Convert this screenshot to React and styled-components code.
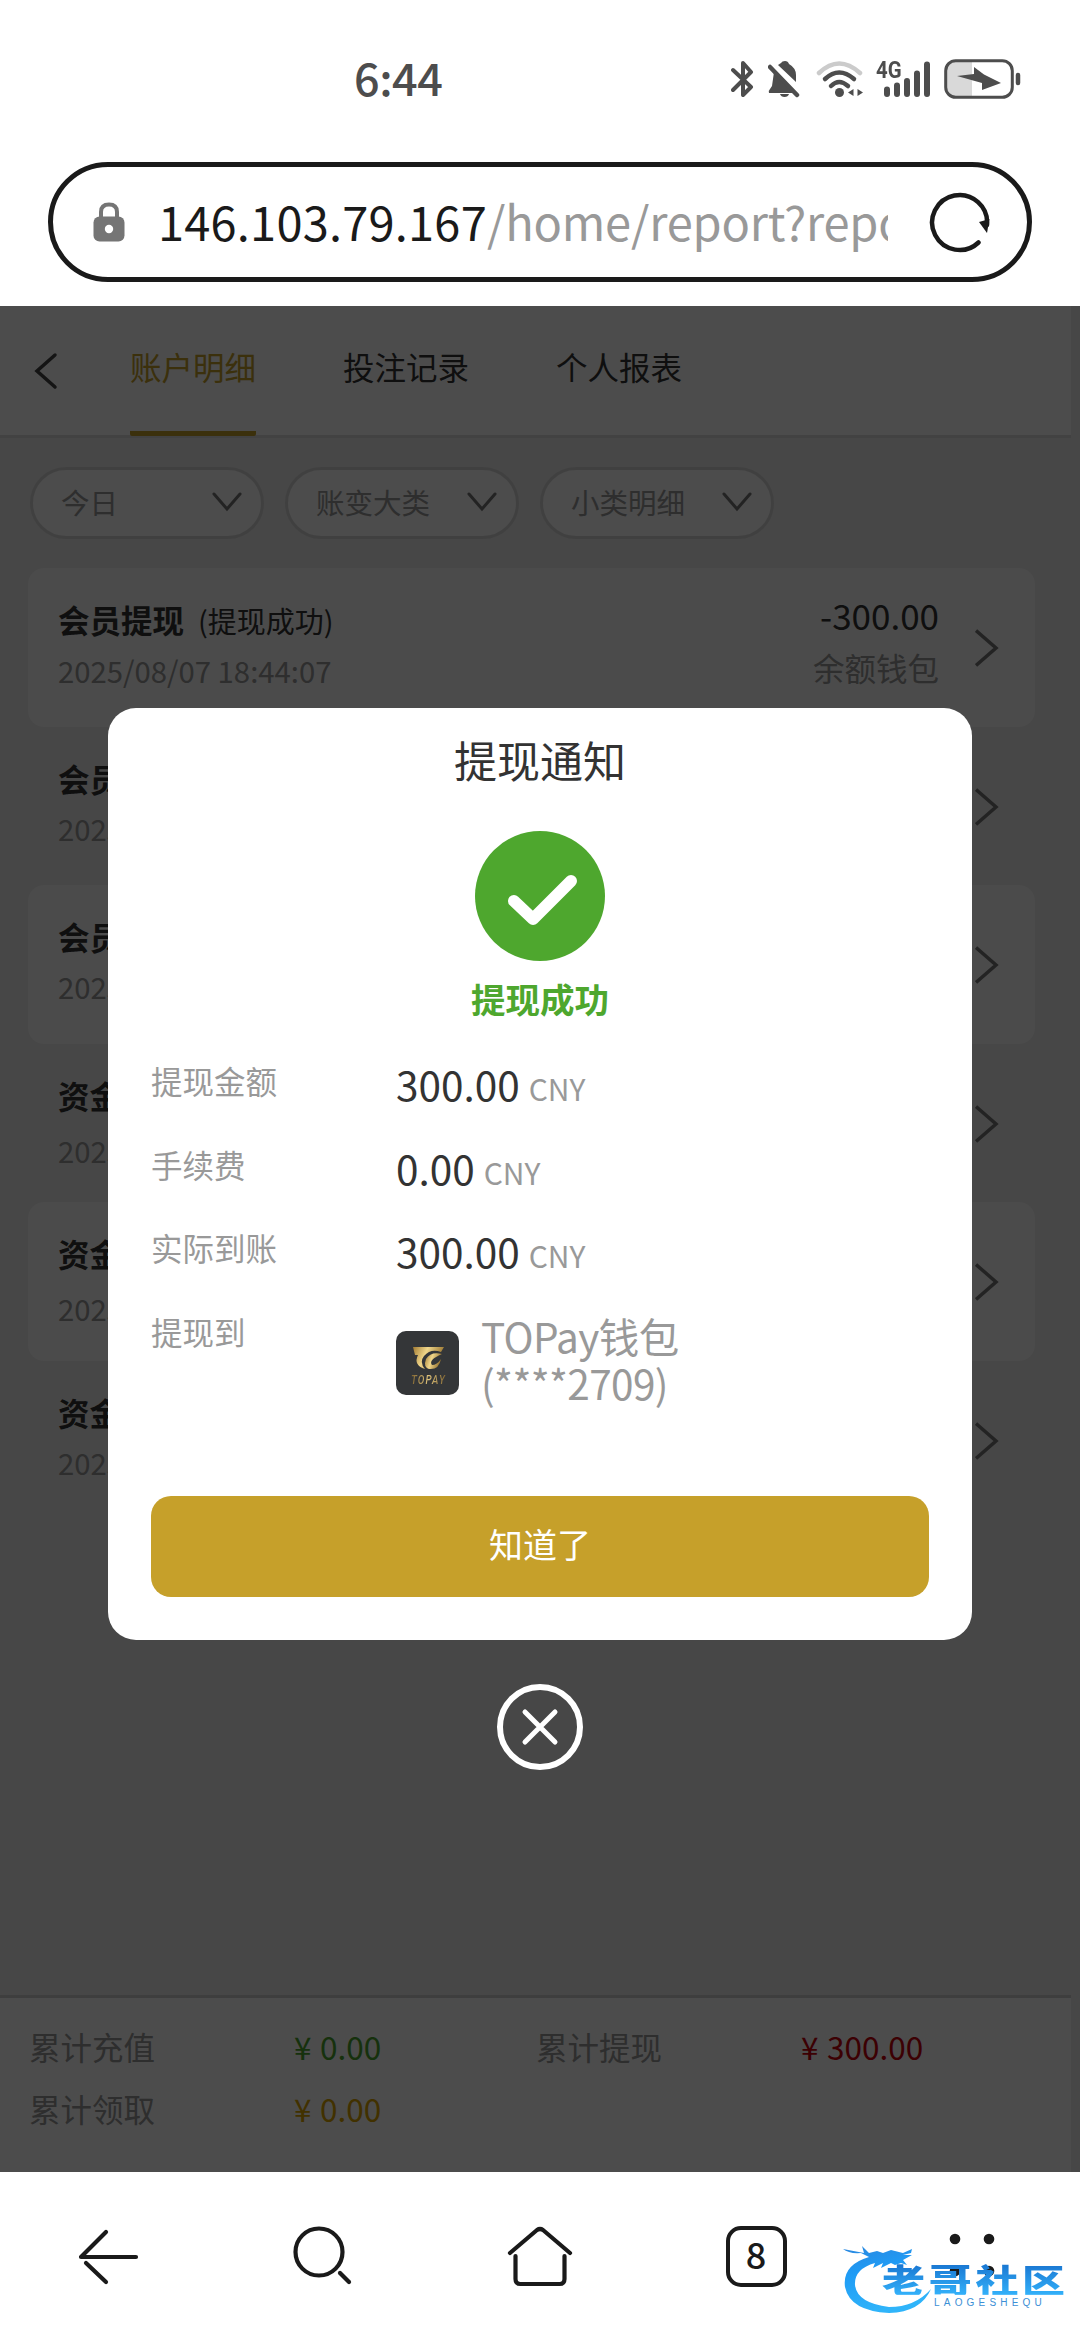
import React from 'react'
import styled, { createGlobalStyle } from 'styled-components'

const tabs = ['账户明细', '投注记录', '个人报表']

const filters = ['今日', '账变大类', '小类明细']

const records = [
    { title: '会员提现', status: '(提现成功)', date: '2025/08/07 18:44:07', amount: '-300.00', wallet: '余额钱包', card: true },
    { title: '会员', date: '2025', card: false },
    { title: '会员', date: '2025', card: true },
    { title: '资金', date: '2025', card: false, loose: true },
    { title: '资金', date: '2025', card: true, loose: true },
    { title: '资金', date: '2025', card: false },
]

const details = [
    { label: '提现金额', value: '300.00' },
    { label: '手续费', value: '0.00' },
    { label: '实际到账', value: '300.00' },
]

const totals = [
    { label: '累计充值', value: '0.00', color: '#4ca62e' },
    { label: '累计提现', value: '300.00', color: '#c8000a' },
    { label: '累计领取', value: '0.00', color: '#d9a400' },
]

function StatusIcons() {
    return (
        <StatusIconRow>
            <svg width="25" height="40" viewBox="0 0 25 40" fill="none" stroke="#4d4d4d" strokeWidth="4" strokeLinecap="round" strokeLinejoin="round">
                <path d="M2 11L20 28L12 36V4L20 13L2 31" />
            </svg>
            <svg width="36" height="40" viewBox="0 0 36 40">
                <path d="M6 13L26 34H1Q0 32 2 30L4 27Z" fill="#4d4d4d" />
                <path d="M10 6L13 4Q14 2 17 2Q20 2 21 5Q28 9 28 16V23Z" fill="#4d4d4d" />
                <path d="M2 8L29 36" stroke="#4d4d4d" strokeWidth="4.500" strokeLinecap="round" />
                <path d="M12 35H21Q20 38 16.500 38Q13 38 12 35Z" fill="#4d4d4d" />
            </svg>
            <svg width="48" height="40" viewBox="0 0 48 40" fill="none" strokeWidth="4.500" strokeLinecap="round">
                <path d="M3 14Q23 -5 44 14" stroke="#cbcbcb" />
                <path d="M9 20Q23 7 38 20" stroke="#4d4d4d" />
                <path d="M15 27Q23 19 32 27" stroke="#4d4d4d" />
                <circle cx="23.500" cy="33.500" r="4.500" fill="#4d4d4d" />
                <path d="M37.500 30V37L32 33.500ZM41.500 30V37L47 33.500Z" fill="#4d4d4d" />
            </svg>
            <SignalBox>
                <svg width="56" height="40" viewBox="0 0 56 40" stroke="#4d4d4d" strokeWidth="6" strokeLinecap="round">
                    <path d="M11 30.500V35M21 26.500V35M31 22V35M41 14.500V35M51 5.500V35" />
                </svg>
                <Network>4G</Network>
            </SignalBox>
            <svg width="78" height="40" viewBox="0 0 78 40">
                <path d="M12 2H28V38H12Q2 38 2 28V12Q2 2 12 2Z" fill="#d9d9d9" />
                <rect x="1.700" y="1.700" width="66.600" height="36.600" rx="10" fill="none" stroke="#4d4d4d" strokeWidth="3" />
                <path d="M30 8L40 15.500L57 24L38 31V24L13 17L30 15Z" fill="#4d4d4d" />
                <path d="M74 16V24" stroke="#4d4d4d" strokeWidth="4.500" strokeLinecap="round" />
            </svg>
        </StatusIconRow>
    )
}

function TopayLogo() {
    return (
        <LogoBox>
            <svg width="64" height="64" viewBox="0 0 64 64">
                <defs>
                    <linearGradient id="gold" x1="0" y1="0" x2="1" y2="0.300">
                        <stop offset="0" stopColor="#a37c33" />
                        <stop offset="0.450" stopColor="#f0d68a" />
                        <stop offset="1" stopColor="#94702c" />
                    </linearGradient>
                </defs>
                <path d="M17 16H48L45 21Q35 17 28 25Q23 31 29 38Q17 34 22 24H19Z" fill="url(#gold)" />
                <path d="M46 23Q35 20 30 28Q27 36 33 38Q43 39 45 28Q41 34 36 34Q32 29 46 23Z" fill="url(#gold)" />
            </svg>
            <LogoName>TOPAY</LogoName>
        </LogoBox>
    )
}

function Watermark() {
    return (
        <WatermarkBox>
            <svg width="100" height="72" viewBox="0 0 100 72">
                <defs>
                    <linearGradient id="dragon" x1="0" y1="0" x2="0.300" y2="1">
                        <stop offset="0" stopColor="#2b86dd" />
                        <stop offset="0.400" stopColor="#1f9bf5" />
                        <stop offset="1" stopColor="#2fb4fa" />
                    </linearGradient>
                </defs>
                <path d="M28 12Q1 20 4 42Q9 66 48 68Q80 67 90 44Q74 62 48 62Q16 58 14 40Q13 24 34 18L32 23L42 18L40 23L50 18L54 20L60 18L66 20L62 15L71 10H62L70 8L71 4L62 8L50 5L42 8L36 6L28 8L21 1L23 8L2 4Q8 9 20 8Z" fill="url(#dragon)" />
            </svg>
            <WatermarkName>老哥社区</WatermarkName>
            <WatermarkLatin>LAOGESHEQU</WatermarkLatin>
        </WatermarkBox>
    )
}

function App() {
    return (
        <Screen>
            <GlobalStyle />
            <StatusBar>
                <Clock>6:44</Clock>
                <StatusIcons />
            </StatusBar>
            <AddressBar>
                <svg width="32" height="40" viewBox="0 0 32 40">
                    <path d="M8 16V10Q8 2.500 16 2.500Q24 2.500 24 10V16" fill="none" stroke="#757575" strokeWidth="4" />
                    <rect x="0.500" y="14.500" width="31" height="25" rx="6" fill="#757575" />
                    <circle cx="16" cy="27" r="4.200" fill="#fff" />
                </svg>
                <Url><b>146.103.79.167</b>/home/report?repo</Url>
                <svg width="62" height="62" viewBox="0 0 62 62">
                    <path d="M49.500 51.500A27.500 27.500 0 1 1 58 34" fill="none" stroke="#1a1a1a" strokeWidth="4.500" strokeLinecap="round" />
                    <path d="M50 31L60.500 28L58 42Z" fill="#1a1a1a" />
                </svg>
            </AddressBar>

            <Page>
                <TabBar>
                    <svg width="24" height="38" viewBox="0 0 24 38" fill="none" stroke="#444" strokeWidth="3.500" strokeLinecap="round">
                        <path d="M21 3L3 19L21 35" />
                    </svg>
                    {
                        tabs.map((tab, i) => (
                            <Tab key={tab} $active={i === 0}>{tab}</Tab>
                        ))
                    }
                </TabBar>
                <Filters>
                    {
                        filters.map(filter => (
                            <Filter key={filter}>
                                {filter}
                                <svg width="32" height="20" viewBox="0 0 32 20" fill="none" stroke="#777" strokeWidth="3" strokeLinecap="round">
                                    <path d="M3 2L16 17L29 2" />
                                </svg>
                            </Filter>
                        ))
                    }
                </Filters>
                <Records>
                    {
                        records.map((item, i) => (
                            <Record key={i} $card={item.card}>
                                <RecordInfo>
                                    <RecordTitle>{item.title}{item.status && <small>{item.status}</small>}</RecordTitle>
                                    <RecordDate $loose={item.loose}>{item.date}</RecordDate>
                                </RecordInfo>
                                <RecordSum>
                                    <Amount>{item.amount}</Amount>
                                    <Wallet>{item.wallet}</Wallet>
                                </RecordSum>
                                <svg width="24" height="40" viewBox="0 0 24 40" fill="none" stroke="#777" strokeWidth="3.500">
                                    <path d="M1 2.500L21 20L1 37.500" />
                                </svg>
                            </Record>
                        ))
                    }
                </Records>
                <Totals>
                    {
                        totals.map(item => (
                            <Total key={item.label}>
                                <TotalLabel>{item.label}</TotalLabel>
                                <TotalValue $color={item.color}><i>¥</i>{item.value}</TotalValue>
                            </Total>
                        ))
                    }
                </Totals>

                <Overlay>
                    <Modal>
                        <ModalTitle>提现通知</ModalTitle>
                        <SuccessIcon>
                            <svg width="130" height="130" viewBox="0 0 130 130" fill="none" stroke="#fff" strokeWidth="12" strokeLinecap="round" strokeLinejoin="round">
                                <path d="M39 70L58 88L96 50" />
                            </svg>
                        </SuccessIcon>
                        <SuccessText>提现成功</SuccessText>
                        <Details>
                            {
                                details.map(item => (
                                    <DetailRow key={item.label}>
                                        <DetailLabel>{item.label}</DetailLabel>
                                        <DetailValue>{item.value}<Currency>CNY</Currency></DetailValue>
                                    </DetailRow>
                                ))
                            }
                            <DetailRow>
                                <DetailLabel>提现到</DetailLabel>
                                <Account>
                                    <TopayLogo />
                                    <AccountName>TOPay钱包<br />(****2709)</AccountName>
                                </Account>
                            </DetailRow>
                        </Details>
                        <ConfirmButton>知道了</ConfirmButton>
                    </Modal>
                    <CloseButton>
                        <svg width="40" height="40" viewBox="0 0 40 40" stroke="#fff" strokeWidth="5" strokeLinecap="round">
                            <path d="M5 5L35 35M35 5L5 35" />
                        </svg>
                    </CloseButton>
                </Overlay>
            </Page>

            <BottomNav>
                <NavItem>
                    <svg width="64" height="64" viewBox="0 0 64 64" fill="none" stroke="#1a1a1a" strokeWidth="4.200" strokeLinecap="round" strokeLinejoin="round">
                        <path d="M60 33H5L30 8" />
                        <path d="M10 39L30 58" />
                    </svg>
                </NavItem>
                <NavItem>
                    <svg width="64" height="64" viewBox="0 0 64 64" fill="none" stroke="#1a1a1a" strokeWidth="4.200" strokeLinecap="round">
                        <circle cx="27" cy="28" r="23.500" />
                        <path d="M48 49L57 58" />
                    </svg>
                </NavItem>
                <NavItem>
                    <svg width="66" height="64" viewBox="0 0 66 64" fill="none" stroke="#1a1a1a" strokeWidth="4.200" strokeLinecap="round" strokeLinejoin="round">
                        <path d="M3 29L30 6Q33 4 36 6L63 29" />
                        <path d="M8.500 32V55Q8.500 60 13.500 60H52.500Q57.500 60 57.500 55V32" />
                    </svg>
                </NavItem>
                <NavItem>
                    <TabCount>8</TabCount>
                </NavItem>
                <NavItem>
                    <svg width="64" height="64" viewBox="0 0 64 64" fill="#1a1a1a">
                        <circle cx="15" cy="15" r="5.300" />
                        <circle cx="49" cy="15" r="5.300" />
                        <circle cx="15" cy="47" r="5.300" />
                        <circle cx="49" cy="47" r="5.300" />
                    </svg>
                </NavItem>
                <Watermark />
            </BottomNav>
        </Screen>
    )
}

export default App


const GlobalStyle = createGlobalStyle`
    body {
        margin: 0;
        background: #fff;
        font-family: "Noto Sans CJK SC", "Noto Sans", sans-serif;
    }

    svg {
        display: block;
        flex-shrink: 0;
    }

    * {
        box-sizing: border-box;
    }
`

const Screen = styled.div`
    width: 1080px;
    height: 2340px;
    display: flex;
    flex-direction: column;
    overflow: hidden;
    background: #fff;
`

const StatusBar = styled.div`
    height: 162px;
    display: flex;
    justify-content: space-between;
    padding: 59px 58px 0 354px;
    flex-shrink: 0;
`

const Clock = styled.div`
    height: 40px;
    line-height: 36px;
    font-size: 45px;
    font-weight: 500;
    letter-spacing: -0.5px;
    color: #4d4d4d;
`

const StatusIconRow = styled.div`
    display: flex;
    gap: 12px;
`

const SignalBox = styled.div`
    position: relative;
`

const Network = styled.span`
    position: absolute;
    left: 0;
    top: -1px;
    font-family: Roboto, sans-serif;
    font-size: 24px;
    font-weight: 700;
    line-height: 24px;
    transform: scaleX(0.85);
    transform-origin: left;
    color: #4d4d4d;
`

const AddressBar = styled.div`
    height: 120px;
    margin: 0 48px 24px;
    padding: 0 36px 0 40px;
    border: 5px solid #1a1a1a;
    border-radius: 60px;
    display: flex;
    align-items: center;
    flex-shrink: 0;
`

const Url = styled.div`
    flex: 1;
    height: 72px;
    margin-left: 33px;
    margin-right: 41px;
    line-height: 69px;
    font-size: 47px;
    letter-spacing: -0.2px;
    white-space: nowrap;
    overflow: hidden;
    color: #999;

    b {
        font-weight: 400;
        letter-spacing: 0.2px;
        color: #1a1a1a;
    }
`

const Page = styled.div`
    position: relative;
    height: 1866px;
    display: flex;
    flex-direction: column;
    flex-shrink: 0;
    padding-right: 9px;
    background: #eee;
`

const TabBar = styled.div`
    height: 132px;
    display: flex;
    align-items: center;
    padding-left: 34px;
    background: #fff;
    border-bottom: 3px solid #dcdcdc;
    flex-shrink: 0;
`

const Tab = styled.div`
    height: 130px;
    line-height: 120px;
    font-size: 31.5px;
    margin-left: ${props => props.$active ? '72px' : '87px'};
    color: ${props => props.$active ? '#c6a02a' : '#333'};
    border-bottom: 5px solid ${props => props.$active ? '#c6a02a' : 'transparent'};
    border-radius: 2px;
`

const Filters = styled.div`
    display: flex;
    gap: 21px;
    padding: 29px 30px;
`

const Filter = styled.div`
    width: 234px;
    height: 72px;
    display: flex;
    align-items: center;
    justify-content: space-between;
    padding: 0 18px 0 28px;
    border: 3px solid #d8d8d8;
    border-radius: 36px;
    background: #fdfdfd;
    font-size: 28.5px;
    line-height: 60px;
    padding-bottom: 2px;
    color: #999;
`

const Records = styled.div`
    padding: 0 36px 0 28px;
    flex: 1;
`

const Record = styled.div`
    height: 158.5px;
    display: flex;
    padding: 0 36px 0 30px;
    border-radius: 16px;
    background: ${props => props.$card ? '#fbfbfb' : 'transparent'};

    svg {
        margin-top: 60px;
    }
`

const RecordInfo = styled.div`
    flex: 1;
    padding-top: 26px;
`

const RecordTitle = styled.div`
    font-size: 31.5px;
    font-weight: 700;
    line-height: 50px;
    color: #333;

    small {
        font-size: 29px;
        font-weight: 400;
        margin-left: 14px;
    }
`

const RecordDate = styled.div`
    margin-top: ${props => props.$loose ? '5px' : 0};
    font-size: 29.3px;
    line-height: 50px;
    color: #999;
`

const RecordSum = styled.div`
    padding-top: 20px;
    margin-right: 36px;
    text-align: right;
    line-height: 53px;
`

const Amount = styled.div`
    font-size: 35px;
    color: #333;
`

const Wallet = styled.div`
    font-size: 31.5px;
    color: #999;
`

const Totals = styled.div`
    height: 177px;
    display: grid;
    grid-template-columns: 507px 507px;
    grid-auto-rows: 62px;
    padding: 17px 0 0 29px;
    border-top: 3px solid #d0d0d0;
    background: #fff;
`

const Total = styled.div`
    display: flex;
    line-height: 62px;
    font-size: 31.5px;
`

const TotalLabel = styled.div`
    width: 263px;
    color: #999;
`

const TotalValue = styled.div`
    color: ${props => props.$color};

    i {
        font-style: normal;
        display: inline-block;
        width: 28px;
        padding-left: 2px;
    }
`

const Overlay = styled.div`
    position: absolute;
    inset: 0;
    display: flex;
    flex-direction: column;
    align-items: center;
    padding-top: 402px;
    background: rgba(0, 0, 0, 0.7);
`

const Modal = styled.div`
    width: 864px;
    height: 932px;
    display: flex;
    flex-direction: column;
    align-items: center;
    border-radius: 28px;
    background: #fff;
`

const ModalTitle = styled.div`
    margin-top: 8px;
    font-size: 43px;
    line-height: 86px;
    color: #333;
`

const SuccessIcon = styled.div`
    width: 130px;
    height: 130px;
    margin-top: 29px;
    border-radius: 50%;
    background: #4ea72e;
`

const SuccessText = styled.div`
    margin-top: 15px;
    font-size: 34.5px;
    font-weight: 700;
    line-height: 44px;
    color: #4ea72e;
`

const Details = styled.div`
    width: 778px;
    margin-top: 36px;
    height: 440px;
`

const DetailRow = styled.div`
    height: 83.7px;
    display: flex;
`

const DetailLabel = styled.div`
    width: 245px;
    font-size: 31.5px;
    line-height: 48px;
    color: #999;
`

const DetailValue = styled.div`
    font-size: 40.5px;
    line-height: 56px;
    color: #333;
`

const Currency = styled.span`
    margin-left: 9px;
    font-size: 30px;
    color: #999;
`

const Account = styled.div`
    display: flex;
    align-items: flex-start;
    padding-top: 5px;
`

const LogoBox = styled.div`
    position: relative;
    width: 63px;
    height: 64px;
    margin-top: 19px;
    border-radius: 10px;
    overflow: hidden;
    background: #343638;
`

const LogoName = styled.span`
    position: absolute;
    left: 15px;
    top: 42px;
    font-family: Roboto, sans-serif;
    font-size: 13px;
    font-style: italic;
    font-weight: 500;
    line-height: 13px;
    letter-spacing: 1.5px;
    transform: scaleX(0.76);
    transform-origin: left;
    background: linear-gradient(90deg, #7d6230, #e0c47c, #7d6230);
    background-clip: text;
    color: transparent;
`

const AccountName = styled.div`
    margin-left: 22px;
    font-size: 40.5px;
    line-height: 47px;
    letter-spacing: -0.6px;
    color: #999;
`

const ConfirmButton = styled.button`
    width: 778px;
    height: 101px;
    border: none;
    border-radius: 20px;
    margin-top: 0;
    padding: 0 0 7px;
    background: #c6a02a;
    color: #fff;
    font-family: inherit;
    font-size: 34px;
`

const CloseButton = styled.div`
    width: 86px;
    height: 86px;
    margin-top: 44px;
    display: flex;
    align-items: center;
    justify-content: center;
    border: 6px solid #fff;
    border-radius: 50%;
`

const BottomNav = styled.div`
    position: relative;
    height: 168px;
    display: flex;
    background: #fff;
`

const NavItem = styled.div`
    flex: 1;
    display: flex;
    justify-content: center;
    padding-top: 52px;
`

const TabCount = styled.div`
    width: 61px;
    height: 61px;
    margin-top: 2px;
    border: 4px solid #1a1a1a;
    border-radius: 15px;
    text-align: center;
    font-size: 36px;
    font-weight: 500;
    line-height: 47px;
    color: #1a1a1a;
`

const WatermarkBox = styled.div`
    position: absolute;
    left: 841px;
    top: 73px;
    width: 230px;
    height: 76px;
`

const WatermarkName = styled.div`
    position: absolute;
    left: 41px;
    top: 12px;
    font-size: 43px;
    font-weight: 900;
    line-height: 43px;
    letter-spacing: 3.7px;
    white-space: nowrap;
    transform: scaleY(0.76);
    background: linear-gradient(180deg, #1873cf, #33b1fa);
    background-clip: text;
    color: transparent;
`

const WatermarkLatin = styled.div`
    position: absolute;
    left: 93px;
    top: 52px;
    font-family: "Liberation Sans", sans-serif;
    font-size: 10px;
    line-height: 12px;
    letter-spacing: 4.2px;
    color: #3c8fd6;
`
